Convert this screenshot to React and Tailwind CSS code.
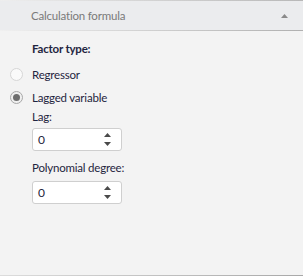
const Spin = () => (
  <div className="flex flex-col items-center gap-[5px] pr-[10px]">
    <svg width="7" height="4" viewBox="0 0 7 4"><path d="M3.5 0 L7 4 L0 4 Z" fill="#4a4a4a" /></svg>
    <svg width="7" height="4" viewBox="0 0 7 4"><path d="M0 0 L7 0 L3.5 4 Z" fill="#4a4a4a" /></svg>
  </div>
)

const NumberBox = ({ value }) => (
  <div className="flex items-center justify-between w-[90px] h-[23px] bg-white border border-[#cfcfcf] rounded-[3px] pl-[5px]">
    <span className="text-[12px] text-[#1f2540]">{value}</span>
    <Spin />
  </div>
)

const Radio = ({ checked, label }) => (
  <div className="flex items-center h-[23px]">
    <div className="w-[32px] pl-[10px]">
      <div className={`w-[13px] h-[13px] rounded-full border flex items-center justify-center ${checked ? 'border-[#a8a8a8] bg-[#f0f0f0]' : 'border-[#d6d6d6] bg-[#fafafa]'}`}>
        {checked && <div className="w-[7px] h-[7px] rounded-full bg-[#6e6e6e]" />}
      </div>
    </div>
    <span className="text-[11.5px] tracking-[-0.2px] text-[#1f2540]">{label}</span>
  </div>
)

export default function App() {
  return (
    <div className="w-[303px] h-[276px] bg-[#f3f3f3] flex flex-col" style={{ fontFamily: 'Lato, "Open Sans", sans-serif' }}>
      <div className="h-px bg-gradient-to-r from-[#eeeeee] to-[#b8b8b8]" />
      <div className="h-[29px] bg-[#ebecee] flex items-center justify-between pl-[31px] pr-[15px]">
        <span className="text-[11.5px] tracking-[-0.2px] text-[#7a7a7a]">Calculation formula</span>
        <svg width="7" height="4" viewBox="0 0 7 4"><path d="M3.5 0 L7 4 L0 4 Z" fill="#8a8a8a" /></svg>
      </div>
      <div className="h-px bg-gradient-to-r from-[#f0f0f0] to-[#b0b0b0]" />
      <div className="flex-1 flex flex-col pt-[8px]">
        <div className="pl-[32px] h-[20px] flex items-center text-[11.5px] tracking-[-0.2px] font-bold text-[#1f2540]">Factor type:</div>
        <div className="h-[4px]" />
        <Radio label="Regressor" />
        <Radio checked label="Lagged variable" />
        <div className="pl-[32px] flex flex-col text-[11.5px] tracking-[-0.2px] text-[#1f2540]">
          <div className="h-[15px] flex items-center">Lag:</div>
          <div className="h-[4px]" />
          <NumberBox value="0" />
          <div className="h-[30px] flex items-center pt-[4px]">Polynomial degree:</div>
          <NumberBox value="0" />
        </div>
      </div>
      <div className="h-px bg-gradient-to-r from-[#dcdcdc] to-[#a8a8a8]" />
    </div>
  )
}
